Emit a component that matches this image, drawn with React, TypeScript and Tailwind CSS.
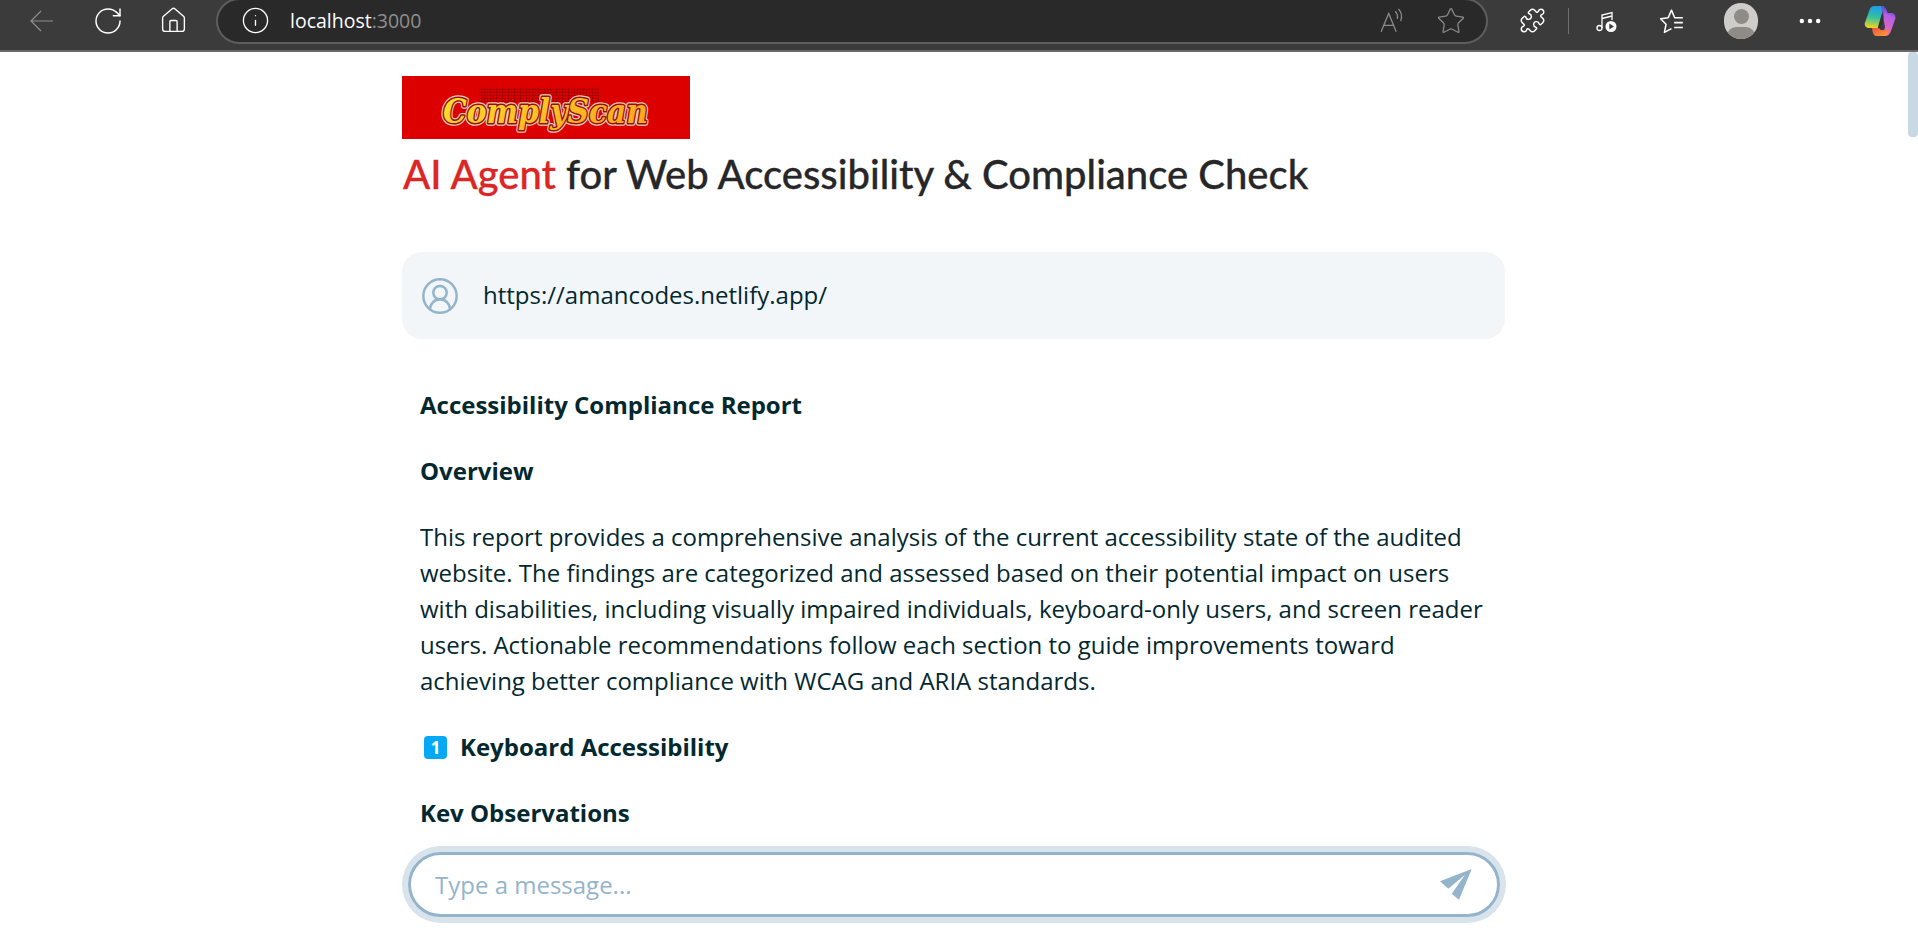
import { Home, RotateCw, Info, Star, MoreHorizontal, CircleUserRound, Puzzle } from "lucide-react";

function BackArrow() {
  return (
    <svg viewBox="0 0 23 22" className="h-[22px] w-[23px]" fill="none" stroke="#8f8f8f" strokeWidth="1.2">
      <path d="M23 11 H1 M11 1 L1 11 L11 21" />
    </svg>
  );
}

function ReadAloudIcon() {
  return (
    <svg viewBox="0 0 24 24" className="h-[26px] w-[26px]" fill="none" stroke="#8a8a8a" strokeWidth="1.2">
      <path d="M1 22 L8 5 L15 22 M3.5 16 H12.5" />
      <path d="M14 3 C16 5 16.5 7 16 10 M17 1 C20 4 20.5 8 19 12" />
    </svg>
  );
}

function MediaIcon() {
  return (
    <svg viewBox="0 0 24 24" className="h-6 w-6" fill="none" stroke="#ffffff" strokeWidth="1.3">
      <circle cx="5.5" cy="19" r="2.5" />
      <path d="M8 19 V6 L18 3.5 V11 M8 9.5 L18 7" />
      <circle cx="17" cy="17.5" r="5.5" fill="#ffffff" stroke="none" />
      <path d="M15.3 14.5 L20 17.5 L15.3 20.5 Z" fill="#3b3b3b" stroke="none" />
    </svg>
  );
}

function FavoritesIcon() {
  return (
    <svg viewBox="0 0 24 24" className="h-[26px] w-[26px]" fill="none" stroke="#ffffff" strokeWidth="1.4" strokeLinejoin="round">
      <path d="M22 9 H14.5 L11.5 2 L8.5 9 L1.5 10 L6.5 15 L5 22.5 L11.5 19" />
      <path d="M14 13.5 H22 M14 18 H22" />
    </svg>
  );
}

function CopilotLogo() {
  return (
    <svg viewBox="0 0 32 32" className="h-8 w-8">
      <defs>
        <linearGradient id="cpLeft" x1="0.4" y1="0" x2="0.3" y2="1">
          <stop offset="0" stopColor="#1b9de8" />
          <stop offset="0.5" stopColor="#35c1a0" />
          <stop offset="1" stopColor="#f7d51d" />
        </linearGradient>
        <linearGradient id="cpRight" x1="0.7" y1="0" x2="0.5" y2="1">
          <stop offset="0" stopColor="#1746c9" />
          <stop offset="0.35" stopColor="#b45fe6" />
          <stop offset="1" stopColor="#f06bb0" />
        </linearGradient>
        <linearGradient id="cpBottom" x1="0" y1="0" x2="1" y2="1">
          <stop offset="0" stopColor="#f0503a" />
          <stop offset="1" stopColor="#f9a13c" />
        </linearGradient>
      </defs>
      <path d="M10 1 H20 L14 23 H5 C2 23 0 20.500 1 17.500 L5.500 5 C6.300 2.500 8 1 10 1 Z" fill="url(#cpLeft)" />
      <path d="M17 1 C20 1 22 2.500 23 6 L23.500 8 H28 C31 8.500 32 11.500 31 14.500 L27 26 C26 29 24 31 21 31 H17 C19 29 20 26 21 22 Z" fill="url(#cpRight)" />
      <path d="M8 23 H15.500 L16.500 25 H25 C24.500 28.500 23 31 20 31 H12 C9.500 31 8.500 27 8 23 Z" fill="url(#cpBottom)" />
      <path d="M13.500 23 L19 5 L20 12 L16 24 Z" fill="#2b2b33" opacity="0.55" />
    </svg>
  );
}

function BrowserBar() {
  return (
    <div className="relative z-10 h-[52px] shrink-0 border-b-2 border-[#6a6a6a] bg-[#3b3b3b]">
      <div className="flex h-[41px] w-full items-center pl-[30px]">
        <BackArrow />
        <RotateCw size={32} strokeWidth={1.1} color="#ffffff" className="ml-[39px]" />
        <Home size={29} strokeWidth={1.15} color="#ffffff" className="ml-[35px]" />
        <div className="ml-[28px] flex h-[46px] w-[1272px] shrink-0 items-center rounded-[24px] border-2 border-[#5e5e5e] bg-[#292929] pl-[23px]">
          <Info size={29} strokeWidth={1.1} color="#ffffff" />
          <span className="ml-[20px] font-['Open_Sans',sans-serif] text-[19.5px] text-white">
            localhost<span className="text-[#8e8e8e]">:3000</span>
          </span>
          <div className="ml-auto flex items-center gap-[30px] pr-[20px]">
            <ReadAloudIcon />
            <Star size={30} strokeWidth={1} color="#8a8a8a" />
          </div>
        </div>
        <Puzzle size={27} strokeWidth={1.3} color="#ffffff" className="ml-[31px]" />
        <div className="ml-[22px] h-[26px] w-[1px] bg-[#707070]" />
        <div className="ml-[25px]">
          <MediaIcon />
        </div>
        <div className="ml-[41px]">
          <FavoritesIcon />
        </div>
        <div className="ml-[39px] h-[36px] w-[34px] overflow-hidden rounded-full bg-[#cfcdc9]">
          <div className="mx-auto mt-[6px] h-[15px] w-[15px] rounded-full bg-[#8f8c88]" />
          <div className="mx-auto mt-[3px] h-[18px] w-[28px] rounded-full bg-[#8f8c88]" />
        </div>
        <MoreHorizontal size={28} strokeWidth={1.8} color="#ffffff" className="ml-[38px]" />
        <div className="ml-[40px]">
          <CopilotLogo />
        </div>
      </div>
    </div>
  );
}

function Logo() {
  return (
    <div className="h-[63px] w-[288px] bg-[#dc0000]">
      <svg viewBox="0 0 288 63" className="h-full w-full" role="img" aria-label="ComplyScan logo">
        <defs>
          <pattern id="dots" width="3" height="3" patternUnits="userSpaceOnUse">
            <circle cx="1.500" cy="1.500" r="1" fill="#8a0000" />
          </pattern>
          <linearGradient id="gold" x1="0" y1="0" x2="1" y2="0.4">
            <stop offset="0" stopColor="#ffe02e" />
            <stop offset="1" stopColor="#ffa820" />
          </linearGradient>
        </defs>
        <rect x="77" y="12" width="120" height="14" fill="url(#dots)" />
        <text x="41" y="47" textLength="205" lengthAdjust="spacingAndGlyphs" fontFamily="'DejaVu Serif', serif" fontWeight="700" fontStyle="italic" fontSize="33" fill="#8e1206" stroke="#f3c9b8" strokeWidth="5.500" strokeLinejoin="round">ComplyScan</text>
        <text x="41" y="47" textLength="205" lengthAdjust="spacingAndGlyphs" fontFamily="'DejaVu Serif', serif" fontWeight="700" fontStyle="italic" fontSize="33" fill="#8e1206" stroke="#8e1206" strokeWidth="3" strokeLinejoin="round">ComplyScan</text>
        <text x="41" y="47" textLength="205" lengthAdjust="spacingAndGlyphs" fontFamily="'DejaVu Serif', serif" fontWeight="700" fontStyle="italic" fontSize="33" fill="url(#gold)">ComplyScan</text>
      </svg>
    </div>
  );
}

export default function App() {
  return (
    <div className="relative flex h-screen flex-col overflow-hidden bg-white font-['Open_Sans',sans-serif] text-[#03282f]">
      <BrowserBar />
      <div className="absolute right-0 top-[52px] h-[85px] w-[10px] rounded-[4px] bg-[#c9d9e4]" />

      <div className="flex min-h-0 flex-1 pr-[10px]">
        <main className="mx-auto flex min-h-0 w-[1104px] flex-col pt-[24px]">
          <Logo />
          <h1 className="ml-[1px] mt-[5px] font-['Lato',sans-serif] text-[40px] font-medium leading-[60px] text-[#27272a] [-webkit-text-stroke:0.3px]">
            <span className="text-[#dc2626]">AI Agent</span> for Web Accessibility &amp; Compliance Check
          </h1>

          <div className="mr-[1px] mt-[48px] flex h-[87px] shrink-0 items-center rounded-[20px] bg-[#f2f6f9] pl-[18px]">
            <CircleUserRound size={40} strokeWidth={1.5} color="#94b4cc" />
            <p className="mb-[2px] ml-[23px] text-[24px]">https://amancodes.netlify.app/</p>
          </div>

          <div className="mt-[48px] min-h-0 flex-1 overflow-hidden pl-[18px] pr-[17px] text-[24px] leading-[36px]">
            <p className="font-bold">Accessibility Compliance Report</p>
            <p className="mt-[30px] font-bold">Overview</p>
            <p className="mt-[30px]">
              This report provides a comprehensive analysis of the current accessibility state of the audited website. The findings are categorized and assessed based on their potential impact on users with disabilities, including visually impaired individuals, keyboard-only users, and screen reader users. Actionable recommendations follow each section to guide improvements toward achieving better compliance with WCAG and ARIA standards.
            </p>
            <div className="mt-[30px] flex items-center font-bold">
              <span className="ml-[4px] flex h-[23px] w-[23px] items-center justify-center rounded-[4px] bg-[#03a9f4] text-[17px] leading-none text-white">1</span>
              <span className="ml-[13px]">Keyboard Accessibility</span>
            </div>
            <p className="mt-[30px] font-bold">Key Observations</p>
          </div>

          <div className="mx-[6px] mb-[25px] mt-[30px] flex h-[65px] shrink-0 items-center rounded-full border-[3px] border-[#94b4cc] pl-[24px] pr-[25px] shadow-[0_0_0_6px_#d8e3ec]">
            <span className="text-[24px] text-[#94b4cc]">Type a message...</span>
            <svg viewBox="0 0 32 31" className="ml-auto h-[31px] w-[32px]" fill="#94b4cc">
              <path d="M0 12.3 L31.7 0 L19 30.7 L11.7 24.7 L25 5.7 L8.3 19.7 Z" />
            </svg>
          </div>
        </main>
      </div>
    </div>
  );
}
